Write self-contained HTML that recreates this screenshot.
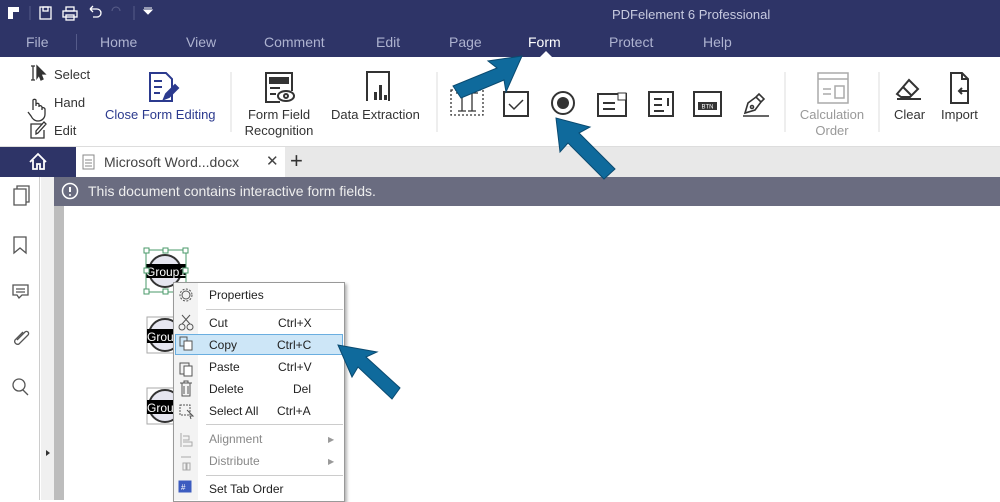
<!DOCTYPE html><html><head><meta charset="utf-8"><style>
*{margin:0;padding:0;box-sizing:border-box}
body{width:1000px;height:500px;overflow:hidden;position:relative;font-family:"Liberation Sans",sans-serif;background:#fff}
.a{position:absolute}
.t{font-size:13px;color:#333;white-space:nowrap}
.m{font-size:14px;color:#aeb3d0;top:34px}
.ct{font-size:12px;color:#222;white-space:nowrap}
</style></head><body>
<div class="a" style="left:0;top:0;width:1000px;height:57px;background:#2e3467"></div>
<svg class="a" style="left:0;top:0" width="160" height="28">
<g fill="#fff"><rect x="8" y="7" width="11" height="5"/><rect x="8" y="12" width="5" height="7"/></g>
<line x1="30" y1="6" x2="30" y2="20" stroke="#555b8a"/>
<g fill="none" stroke="#fff" stroke-width="1.3"><rect x="40" y="7" width="11" height="12"/><rect x="43" y="7" width="5" height="4"/>
<rect x="63" y="11" width="14" height="6"/><rect x="66" y="7" width="8" height="4"/><rect x="66" y="15" width="8" height="5"/>
<path d="M90 9h7a4 4 0 0 1 0 8h-4M90 9l3-3M90 9l3 3"/></g>
<path d="M120 11a4 4 0 0 0 -8 0" stroke="#5a5f8a" fill="none"/>
<line x1="134" y1="6" x2="134" y2="20" stroke="#555b8a"/>
<path d="M144 10h8l-4 4z M144 8h8" stroke="#fff" fill="#fff"/>
</svg>
<div class="a" style="left:612px;top:7px;font-size:13px;color:#c8cbe0">PDFelement 6 Professional</div>
<div class="a m" style="left:26px">File</div>
<div class="a" style="left:76px;top:34px;width:1px;height:16px;background:#555b8a"></div>
<div class="a m" style="left:100px">Home</div>
<div class="a m" style="left:186px">View</div>
<div class="a m" style="left:264px">Comment</div>
<div class="a m" style="left:376px">Edit</div>
<div class="a m" style="left:449px">Page</div>
<div class="a m" style="left:528px;color:#fff">Form</div>
<div class="a m" style="left:609px">Protect</div>
<div class="a m" style="left:703px">Help</div>
<div class="a" style="left:540px;top:51px;width:0;height:0;border-left:6px solid transparent;border-right:6px solid transparent;border-bottom:6px solid #fff"></div>
<!-- ribbon -->
<svg class="a" style="left:0;top:57px" width="1000" height="90">
<g fill="none" stroke="#333" stroke-width="1.3">
<path d="M33 9v14M31 9h4M31 23h4M37 9l8 8h-4l2 5-2 1-2-5-2 3z" fill="#333"/>
<path d="M33 53v-10a2 2 0 0 1 3 0v6M36 47a2 2 0 0 1 3 0v3M39 49a2 2 0 0 1 3 1v3M42 51a2 2 0 0 1 3 1v5c0 4-3 7-7 7s-6-3-7-5l-3-4"/>
<path d="M43 67h-12v14h13v-8M36 77l2-1 8-9-2-2-8 9z"/>
</g>
<g fill="none" stroke="#2b3a8e" stroke-width="2"><path d="M150 16v28h22V22l-6-6z"/><path d="M154 24h8M154 30h8M154 36h6"/><path d="M164 42l2-5 9-9 3 3-9 9z" fill="#2b3a8e"/></g>
<line x1="231" y1="15" x2="231" y2="75" stroke="#ddd"/>
<g fill="none" stroke="#333" stroke-width="2"><path d="M280 45h-14V16h26v18"/><rect x="270" y="21" width="18" height="5" fill="#333"/><path d="M270 31h10M270 37h6"/><ellipse cx="286" cy="39" rx="8" ry="5"/><circle cx="286" cy="39" r="2"/></g>
<g fill="none" stroke="#333" stroke-width="2"><path d="M367 44V15h22v29"/></g><g fill="#333"><rect x="374" y="35" width="3" height="8"/><rect x="379" y="28" width="3" height="15"/><rect x="384" y="38" width="3" height="5"/></g>
<line x1="437" y1="15" x2="437" y2="75" stroke="#ddd"/>
<g fill="none" stroke="#333" stroke-width="1.3"><rect x="451" y="33" width="32" height="25" stroke-dasharray="2 2"/><path d="M456 36h22M462 36v18M472 36v18M458 54h8M468 54h8"/></g>
<rect x="504" y="35" width="24" height="24" fill="none" stroke="#333" stroke-width="2"/><path d="M509 47l5 5 9-9" stroke="#333" fill="none" stroke-width="1.5"/>
<circle cx="563" cy="46" r="11" fill="none" stroke="#333" stroke-width="2"/><circle cx="563" cy="46" r="6" fill="#333"/>
<g fill="none" stroke="#333" stroke-width="2"><path d="M598 37h28v22h-28z"/><path d="M603 46h12M603 52h12"/></g><rect x="618" y="36" width="8" height="7" fill="#fff" stroke="#333"/>
<g fill="none" stroke="#333" stroke-width="2"><rect x="649" y="35" width="24" height="24"/><path d="M654 42h8M654 48h8M654 54h10M668 41v8"/></g>
<rect x="694" y="35" width="27" height="24" fill="none" stroke="#333" stroke-width="2"/><rect x="698" y="45" width="19" height="8" fill="#333"/><text x="707.5" y="51.5" font-size="6" fill="#fff" text-anchor="middle" font-family="Liberation Sans">BTN</text>
<g fill="none" stroke="#333" stroke-width="1.6"><path d="M743 59h26M745 56l3-10 8-6 5 5-6 8zM756 40l3-3 5 5-3 3"/><circle cx="752" cy="50" r="1.5"/></g>
<line x1="785" y1="15" x2="785" y2="75" stroke="#ddd"/>
<g fill="none" stroke="#aaa" stroke-width="1.5"><path d="M818 16h30v30h-30z M818 22h30"/><path d="M823 32h8M823 37h8"/><rect x="835" y="29" width="9" height="12"/></g>
<line x1="879" y1="15" x2="879" y2="75" stroke="#ddd"/>
<g fill="none" stroke="#333" stroke-width="2"><path d="M897 37l12-14 9 9-8 8h-9z M903 30l9 9 M897 42h24"/></g>
<g fill="none" stroke="#333" stroke-width="2"><path d="M951 16h11l6 6v24h-17z M962 16v6h6 M967 34h-8M962 31l-3 3 3 3"/></g>
</svg>
<div class="a t" style="left:54px;top:67px">Select</div>
<div class="a t" style="left:54px;top:95px">Hand</div>
<div class="a t" style="left:54px;top:123px">Edit</div>
<div class="a t" style="left:105px;top:107px;color:#2b3a8e">Close Form Editing</div>
<div class="a t" style="left:244px;top:107px;text-align:center;line-height:16px;width:70px">Form Field<br>Recognition</div>
<div class="a t" style="left:331px;top:107px">Data Extraction</div>
<div class="a t" style="left:798px;top:107px;text-align:center;line-height:16px;width:68px;color:#999">Calculation<br>Order</div>
<div class="a t" style="left:894px;top:107px">Clear</div>
<div class="a t" style="left:941px;top:107px">Import</div>
<!-- tabs -->
<div class="a" style="left:0;top:146px;width:1000px;height:31px;background:#e8e8e8;border-top:1px solid #ddd"></div>
<div class="a" style="left:0;top:147px;width:76px;height:30px;background:#2e3467"></div>
<svg class="a" style="left:28px;top:152px" width="22" height="20"><path d="M2 10L10 2l8 8M5 8v9h4v-5h3v5h4V8" fill="none" stroke="#fff" stroke-width="1.8"/></svg>
<div class="a" style="left:76px;top:147px;width:209px;height:30px;background:#fff"></div>
<svg class="a" style="left:82px;top:154px" width="14" height="16"><rect x="1" y="1" width="11" height="14" fill="none" stroke="#888"/><path d="M3 6h7M3 9h7M3 12h7" stroke="#888"/></svg>
<div class="a" style="left:104px;top:154px;font-size:14px;color:#444">Microsoft Word...docx</div>
<div class="a" style="left:266px;top:152px;font-size:15px;color:#444">✕</div>
<div class="a" style="left:290px;top:148px;font-size:22px;color:#333;font-weight:300">+</div>
<!-- sidebar and doc -->
<div class="a" style="left:0;top:177px;width:40px;height:323px;background:#fff;border-right:1px solid #ccc"></div>
<div class="a" style="left:41px;top:177px;width:13px;height:323px;background:#f0f0f0"></div>
<div class="a" style="left:54px;top:177px;width:10px;height:323px;background:#bdbdbd"></div>
<div class="a" style="left:54px;top:177px;width:946px;height:29px;background:#6a6c80"></div>
<svg class="a" style="left:61px;top:182px" width="20" height="20"><circle cx="9" cy="9" r="7.5" fill="none" stroke="#fff" stroke-width="1.5"/><path d="M9 5v5" stroke="#fff" stroke-width="2"/><circle cx="9" cy="13" r="1" fill="#fff"/></svg>
<div class="a" style="left:88px;top:183px;font-size:14px;color:#eee">This document contains interactive form fields.</div>
<svg class="a" style="left:0;top:177px" width="60" height="323" fill="none" stroke="#555" stroke-width="1.3">
<path d="M14 12h12v16h-12z M17 12v-3h12v16h-3" /><path d="M14 60v16l6-5 6 5V60z"/><path d="M13 108h15v10h-6l-3 3-2-3h-4z M16 112h9M16 115h9"/><path d="M23 155l-8 8a3 3 0 0 0 4 4l9-9a2 2 0 0 0-3-3l-8 8"/><circle cx="19" cy="208" r="6"/><path d="M23 213l5 5"/>
<path d="M46 273l4 3-4 3z" fill="#333" stroke="none"/></svg>
<!-- form fields -->
<svg class="a" style="left:140px;top:245px" width="60" height="190">
<circle cx="25" cy="26" r="16" fill="#e6e6f0" stroke="#333" stroke-width="2"/><rect x="6" y="19" width="40" height="14" fill="#000"/><text x="6" y="31" fill="#fff" font-size="12" font-family="Liberation Sans">Group1</text>
<rect x="6" y="5" width="40" height="42" fill="none" stroke="#4a9a6a"/>
<g fill="#fff" stroke="#4a9a6a"><rect x="4" y="3" width="5" height="5"/><rect x="23" y="3" width="5" height="5"/><rect x="43" y="3" width="5" height="5"/><rect x="4" y="23" width="5" height="5"/><rect x="43" y="23" width="5" height="5"/><rect x="4" y="44" width="5" height="5"/><rect x="23" y="44" width="5" height="5"/></g>
<rect x="7" y="72" width="38" height="36" fill="none" stroke="#aaa"/><circle cx="25" cy="90" r="16" fill="#e6e6f0" stroke="#333" stroke-width="2"/><rect x="7" y="84" width="38" height="14" fill="#000"/><text x="7" y="96" fill="#fff" font-size="12" font-family="Liberation Sans">Group</text>
<rect x="7" y="143" width="38" height="36" fill="none" stroke="#aaa"/><circle cx="25" cy="161" r="16" fill="#e6e6f0" stroke="#333" stroke-width="2"/><rect x="7" y="155" width="38" height="14" fill="#000"/><text x="7" y="167" fill="#fff" font-size="12" font-family="Liberation Sans">Group</text>
</svg>
<!-- context menu -->
<div class="a" style="left:173px;top:282px;width:172px;height:220px;background:#fff;border:1px solid #999;box-shadow:2px 2px 3px rgba(0,0,0,.3)"></div>
<div class="a" style="left:174px;top:283px;width:24px;height:217px;background:#f3f3f3"></div>
<div class="a" style="left:206px;top:309px;width:137px;height:1px;background:#ccc"></div>
<div class="a" style="left:206px;top:424px;width:137px;height:1px;background:#ccc"></div>
<div class="a" style="left:206px;top:475px;width:137px;height:1px;background:#ccc"></div>
<div class="a" style="left:175px;top:334px;width:168px;height:21px;background:#cde6f7;border:1px solid #6aaee0"></div>
<div class="a ct" style="left:209px;top:288px">Properties</div>
<div class="a ct" style="left:209px;top:316px">Cut</div><div class="a ct" style="left:278px;top:316px">Ctrl+X</div>
<div class="a ct" style="left:209px;top:338px">Copy</div><div class="a ct" style="left:277px;top:338px">Ctrl+C</div>
<div class="a ct" style="left:209px;top:360px">Paste</div><div class="a ct" style="left:278px;top:360px">Ctrl+V</div>
<div class="a ct" style="left:209px;top:382px">Delete</div><div class="a ct" style="left:293px;top:382px">Del</div>
<div class="a ct" style="left:209px;top:404px">Select All</div><div class="a ct" style="left:277px;top:404px">Ctrl+A</div>
<div class="a ct" style="left:209px;top:432px;color:#888">Alignment</div><div class="a ct" style="left:328px;top:432px;color:#999;font-size:8px;top:435px">▶</div>
<div class="a ct" style="left:209px;top:454px;color:#888">Distribute</div><div class="a ct" style="left:328px;top:457px;color:#999;font-size:8px">▶</div>
<div class="a ct" style="left:209px;top:482px">Set Tab Order</div>
<svg class="a" style="left:176px;top:285px" width="20" height="215" fill="none" stroke="#555" stroke-width="1">
<circle cx="10" cy="10" r="4"/><circle cx="10" cy="10" r="6" stroke-dasharray="2 1.5"/>
<circle cx="6" cy="42" r="3"/><circle cx="14" cy="42" r="3"/><path d="M6 39l8-9M14 39l-8-9"/>
<rect x="4" y="52" width="7" height="9"/><rect x="8" y="56" width="8" height="9" fill="#fff"/>
<rect x="4" y="78" width="9" height="11"/><rect x="8" y="81" width="8" height="10" fill="#fff"/>
<path d="M4 98h12M6 98v13h8V98M8 101v8M12 101v8M8 98v-2h4v2"/>
<rect x="4" y="120" width="10" height="10" stroke-dasharray="2 1"/><path d="M11 125l6 6-3 0 1 3"/>
<path d="M5 148v14M7 151h6v4h-6M7 157h9v4h-9" stroke="#aaa"/><path d="M5 172h10M7 178h3v7h-3zM11 178h3v7h-3z" stroke="#aaa"/>
<rect x="3" y="196" width="12" height="11" fill="#3c5cc0" stroke="#3c5cc0"/><text x="5" y="205" font-size="8" fill="#fff" stroke="none">#</text>
</svg>
<!-- arrows -->
<svg class="a" style="left:0;top:0" width="1000" height="500">
<g fill="#0f6a9c" stroke="#0a4a70" stroke-width="1">
<path d="M522 56l-34 5 9 7-44 18 8 12 43-18 2 12z"/>
<path d="M556 118l4 34 8-9 36 36 11-10-36-36 11-6z"/>
<path d="M338 345l14 32 6-10 34 32 8-11-34-31 11-5z"/>
</g></svg>
</body></html>
